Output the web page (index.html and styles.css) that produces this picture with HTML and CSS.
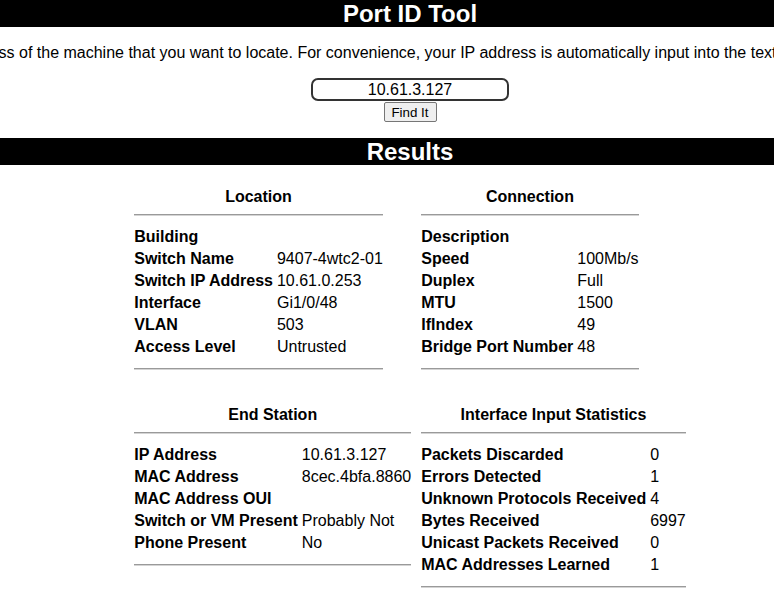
FILE: index.html
```html
<!DOCTYPE html>
<html>
<head>
<meta charset="utf-8">
<title>Port ID Tool</title>
<link rel="stylesheet" href="styles.css">
</head>
<body>
<div class="page">
  <h1 class="bar">Port ID Tool</h1>
  <p class="intro">Enter the IP address of the machine that you want to locate. For convenience, your IP address is automatically input into the text box.</p>
  <form class="lookup">
    <input class="ip-input" type="text" value="10.61.3.127">
    <button class="find-btn" type="button">Find It</button>
  </form>
  <h2 class="bar">Results</h2>
  <div class="results">
    <section class="panel">
      <div class="panel-title">Location</div>
      <div class="rule"></div>
      <div class="rows">
        <div class="k">Building</div><div class="v"></div>
        <div class="k">Switch Name</div><div class="v">9407-4wtc2-01</div>
        <div class="k">Switch IP Address</div><div class="v">10.61.0.253</div>
        <div class="k">Interface</div><div class="v">Gi1/0/48</div>
        <div class="k">VLAN</div><div class="v">503</div>
        <div class="k">Access Level</div><div class="v">Untrusted</div>
      </div>
      <div class="rule"></div>
    </section>
    <section class="panel">
      <div class="panel-title">Connection</div>
      <div class="rule"></div>
      <div class="rows">
        <div class="k">Description</div><div class="v"></div>
        <div class="k">Speed</div><div class="v">100Mb/s</div>
        <div class="k">Duplex</div><div class="v">Full</div>
        <div class="k">MTU</div><div class="v">1500</div>
        <div class="k">IfIndex</div><div class="v">49</div>
        <div class="k">Bridge Port Number</div><div class="v">48</div>
      </div>
      <div class="rule"></div>
    </section>
    <section class="panel">
      <div class="panel-title">End Station</div>
      <div class="rule"></div>
      <div class="rows">
        <div class="k">IP Address</div><div class="v">10.61.3.127</div>
        <div class="k">MAC Address</div><div class="v">8cec.4bfa.8860</div>
        <div class="k">MAC Address OUI</div><div class="v"></div>
        <div class="k">Switch or VM Present</div><div class="v">Probably Not</div>
        <div class="k">Phone Present</div><div class="v">No</div>
      </div>
      <div class="rule"></div>
    </section>
    <section class="panel">
      <div class="panel-title">Interface Input Statistics</div>
      <div class="rule"></div>
      <div class="rows">
        <div class="k">Packets Discarded</div><div class="v">0</div>
        <div class="k">Errors Detected</div><div class="v">1</div>
        <div class="k">Unknown Protocols Received</div><div class="v">4</div>
        <div class="k">Bytes Received</div><div class="v">6997</div>
        <div class="k">Unicast Packets Received</div><div class="v">0</div>
        <div class="k">MAC Addresses Learned</div><div class="v">1</div>
      </div>
      <div class="rule"></div>
    </section>
  </div>
</div>
</body>
</html>
```
FILE: styles.css
```css
html, body {
  margin: 0;
  padding: 0;
  background: #fff;
  overflow: hidden;
}
body {
  font-family: "Liberation Sans", Arial, sans-serif;
  font-size: 16px;
  color: #000;
}
.page {
  width: 820px;
}
.bar {
  margin: 0;
  background: #000;
  color: #fff;
  font-size: 24px;
  font-weight: bold;
  text-align: center;
  height: 27px;
  line-height: 27px;
}
.intro {
  margin: 17px 0 0 -131px;
  white-space: nowrap;
  line-height: 18px;
}
.lookup {
  margin: 16px 0 0;
  display: flex;
  flex-direction: column;
  align-items: center;
}
.ip-input {
  box-sizing: border-box;
  width: 198px;
  height: 23px;
  border: 2px solid #333;
  border-radius: 7px;
  padding: 0 4px;
  font-family: "Liberation Sans", Arial, sans-serif;
  font-size: 16px;
  text-align: center;
  color: #000;
  outline: none;
}
.find-btn {
  box-sizing: border-box;
  margin-top: 1px;
  width: 53px;
  height: 20px;
  padding: 0 6px;
  border: 1px solid #767676;
  border-radius: 2px;
  background: #efefef;
  font-family: "Liberation Sans", Arial, sans-serif;
  font-size: 13.33px;
  color: #000;
}
.lookup + .bar {
  margin-top: 16px;
}
.results {
  display: grid;
  grid-template-columns: auto auto;
  justify-content: center;
  align-items: start;
  column-gap: 10px;
  row-gap: 36px;
  margin-top: 23px;
}
.panel {
  justify-self: start;
  display: flex;
  flex-direction: column;
  line-height: 18px;
}
.panel-title {
  font-weight: bold;
  text-align: center;
}
.rule {
  height: 0;
  border-top: 1px solid #9a9a9a;
  border-bottom: 1px solid #d4d4d4;
  margin-top: 8px;
}
.rows {
  display: grid;
  grid-template-columns: auto auto;
  column-gap: 4px;
  row-gap: 4px;
  margin-top: 12px;
}
.rows + .rule {
  margin-top: 12px;
}
.k {
  font-weight: bold;
}
```
